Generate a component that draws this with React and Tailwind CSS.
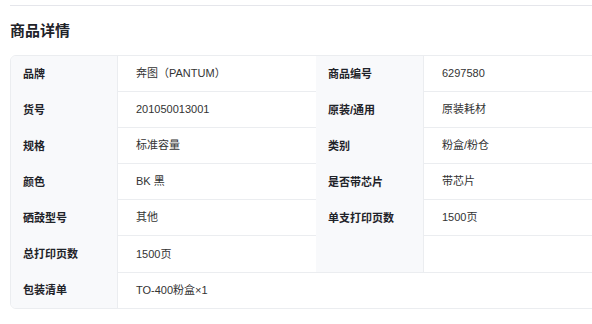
const rows = [
  ['品牌', '奔图（PANTUM）', '商品编号', '6297580'],
  ['货号', '201050013001', '原装/通用', '原装耗材'],
  ['规格', '标准容量', '类别', '粉盒/粉仓'],
  ['颜色', 'BK 黑', '是否带芯片', '带芯片'],
  ['硒鼓型号', '其他', '单支打印页数', '1500页'],
  ['总打印页数', '1500页', '', ''],
];

const font = { fontFamily: '"Liberation Sans", "Noto Sans CJK SC", sans-serif' };

function Label({ children, border }) {
  return (
    <div
      className={`flex h-9 shrink-0 items-center bg-[#f8f9fb] pl-3 text-[11px] font-semibold text-[#1f2329] ${border ? 'w-[107px] border-r border-[#ebedf0]' : 'w-[108px] border-r border-[#ebedf0]'}`}
    >
      {children}
    </div>
  );
}

export default function App() {
  return (
    <div className="h-[324px] w-[592px] overflow-hidden bg-white" style={font}>
      <div className="ml-[10px] mt-[5px] w-[600px] border-t border-[#e5e6eb] pt-[15px]">
        <h2 className="text-[15px] font-bold leading-5 text-[#1f2329]">商品详情</h2>
        <div className="mt-[14px] overflow-hidden rounded-md border border-[#ebedf0]">
          {rows.map((r, i) => {
            const last = i === rows.length - 1;
            const cell = `flex h-9 items-center pl-[18px] text-[11px] text-[#333] ${last ? '' : 'border-b border-[#ebedf0]'}`;
            return (
              <div key={i} className="flex">
                <Label border>{r[0]}</Label>
                <div className={`${cell} w-[198px] shrink-0`}>{r[1]}</div>
                <Label>{r[2]}</Label>
                <div className={`${cell} flex-1`}>{r[3]}</div>
              </div>
            );
          })}
          <div className="flex">
            <Label border>包装清单</Label>
            <div className="flex h-9 flex-1 items-center border-t border-[#ebedf0] pl-[18px] text-[11px] text-[#333]">
              TO-400粉盒×1
            </div>
          </div>
        </div>
      </div>
    </div>
  );
}
